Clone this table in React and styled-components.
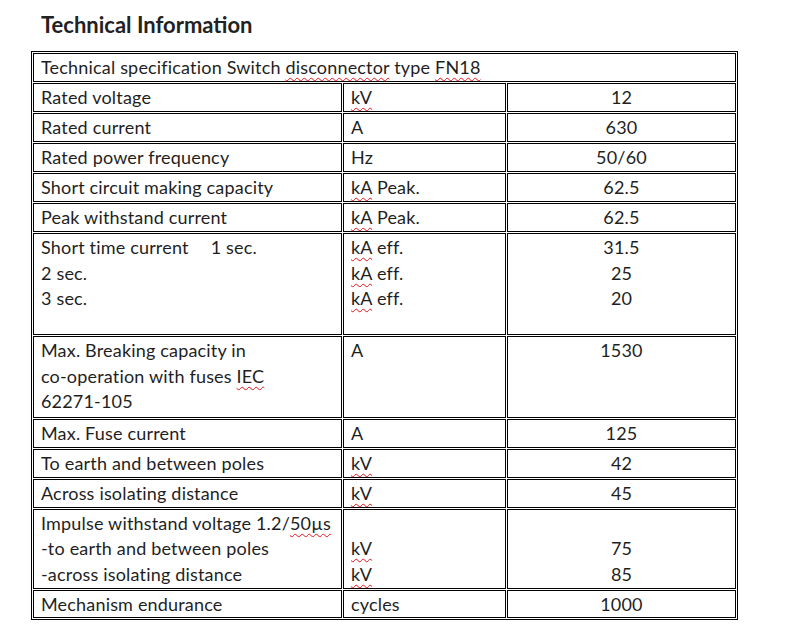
import React from "react";
import styled, { createGlobalStyle } from "styled-components";

const GlobalStyle = createGlobalStyle`
  body {
    margin: 0;
    background: #fff;
    font-family: Lato, "Open Sans", sans-serif;
    color: #1f1f1f;
  }
`;

const Page = styled.div`
  padding: 12px 0 0 31px;
`;

const Heading = styled.h2`
  margin: 0 0 13px 10px;
  font-family: Lato, "Open Sans", sans-serif;
  font-size: 22px;
  font-weight: 700;
  line-height: 26px;
  color: #222;
`;

const SpecTable = styled.table`
  width: 707px;
  table-layout: fixed;
  border-collapse: separate;
  border-spacing: 1px;
  border: 1px solid #000;
`;

const Row = styled.tr`
  height: ${(p) => p.$h}px;
`;

const Cell = styled.td`
  box-sizing: border-box;
  border: 1px solid #000;
  padding: 1px 7px 0;
  vertical-align: top;
  text-align: ${(p) => (p.$center ? "center" : "left")};
  font-size: 18px;
  letter-spacing: 0.18px;
  line-height: 25.5px;
  white-space: nowrap;
`;

const Line = styled.div`
  height: 25.5px;
`;

const Squiggle = styled.span`
  text-decoration: underline wavy #e8141b;
  text-decoration-thickness: 1.2px;
  text-underline-offset: 3px;
  text-decoration-skip-ink: none;
`;

const Gap = styled.span`
  display: inline-block;
  width: 22px;
`;

const S = ({ children }) => <Squiggle>{children}</Squiggle>;

const rows = [
  { h: 29, label: ["Rated voltage"], unit: [<S>kV</S>], value: ["12"] },
  { h: 29, label: ["Rated current"], unit: ["A"], value: ["630"] },
  { h: 29, label: ["Rated power frequency"], unit: ["Hz"], value: ["50/60"] },
  { h: 29, label: ["Short circuit making capacity"], unit: [<><S>kA</S> Peak.</>], value: ["62.5"] },
  { h: 29, label: ["Peak withstand current"], unit: [<><S>kA</S> Peak.</>], value: ["62.5"] },
  {
    h: 102,
    label: [<>Short time current<Gap />1 sec.</>, "2 sec.", "3 sec."],
    unit: [<><S>kA</S> eff.</>, <><S>kA</S> eff.</>, <><S>kA</S> eff.</>],
    value: ["31.5", "25", "20"],
  },
  {
    h: 82,
    label: ["Max. Breaking capacity in", <>co-operation with fuses <S>IEC</S></>, "62271-105"],
    unit: ["A"],
    value: ["1530"],
  },
  { h: 28, label: ["Max. Fuse current"], unit: ["A"], value: ["125"] },
  { h: 29, label: ["To earth and between poles"], unit: [<S>kV</S>], value: ["42"] },
  { h: 29, label: ["Across isolating distance"], unit: [<S>kV</S>], value: ["45"] },
  {
    h: 80,
    label: [<>Impulse withstand voltage 1.2/<S>50µs</S></>, "-to earth and between poles", "-across isolating distance"],
    unit: ["\u00a0", <S>kV</S>, <S>kV</S>],
    value: ["\u00a0", "75", "85"],
  },
  { h: 28, label: ["Mechanism endurance"], unit: ["cycles"], value: ["1000"] },
];

function App() {
  return (
    <Page>
      <GlobalStyle />
      <Heading>Technical Information</Heading>
      <SpecTable>
        <colgroup>
          <col style={{ width: 309 }} />
          <col style={{ width: 163 }} />
          <col style={{ width: 229 }} />
        </colgroup>
        <tbody>
          <Row $h={29}>
            <Cell colSpan={3}>
              <Line>
                Technical specification Switch <S>disconnector</S> type <S>FN18</S>
              </Line>
            </Cell>
          </Row>
          {rows.map((r, i) => (
            <Row key={i} $h={r.h}>
              <Cell>
                {r.label.map((t, j) => (
                  <Line key={j}>{t}</Line>
                ))}
              </Cell>
              <Cell>
                {r.unit.map((t, j) => (
                  <Line key={j}>{t}</Line>
                ))}
              </Cell>
              <Cell $center>
                {r.value.map((t, j) => (
                  <Line key={j}>{t}</Line>
                ))}
              </Cell>
            </Row>
          ))}
        </tbody>
      </SpecTable>
    </Page>
  );
}

export default App;
